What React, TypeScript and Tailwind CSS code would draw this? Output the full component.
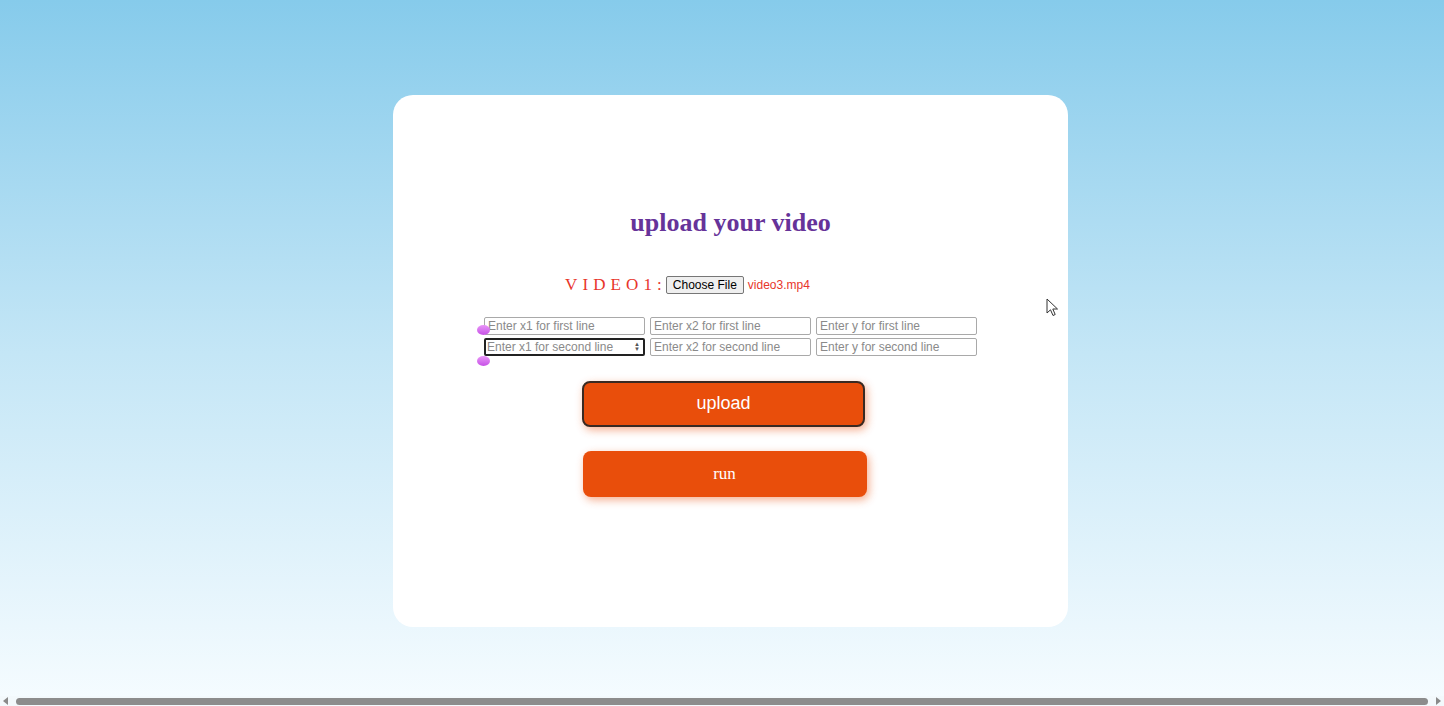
import React from 'react'

const serif = { fontFamily: '"Liberation Serif", "Times New Roman", serif' }

const FIELDS = [
  ['Enter x1 for first line', 'Enter x2 for first line', 'Enter y for first line'],
  ['Enter x1 for second line', 'Enter x2 for second line', 'Enter y for second line'],
]

const Cursor = () => (
  <svg width="14" height="20" viewBox="0 0 14 20" className="absolute left-[1046px] top-[298px]">
    <path d="M1 1 L1 15 L4.5 11.8 L7 17.5 L9.2 16.5 L6.8 11 L11.5 11 Z" fill="#fff" stroke="#333" strokeWidth="1" strokeLinejoin="round" />
  </svg>
)

const App: React.FC = () => {
  return (
    <div
      className="relative w-full h-[706px] overflow-hidden flex flex-col bg-linear-to-b from-[#86cbeb] via-[#c4e6f6] to-[#f6fcff]"
      style={{ fontFamily: '"Liberation Sans", Arial, sans-serif' }}
    >
      <div className="flex-1 flex justify-center pt-[95px] pl-[17px]">
        <div className="w-[675px] h-[532px] bg-white rounded-[20px] flex flex-col items-center pt-[111px]">
          <h1 className="text-[26px] leading-[34px] font-bold text-[#663399]" style={serif}>
            upload your video
          </h1>

          <div className="flex items-center mt-[32px] w-[331px]">
            <span className="text-[17px] text-[#e8352b] tracking-[0.3em] mr-[-1px]" style={serif}>
              VIDEO1:
            </span>
            <div className="flex items-center text-[12px] text-[#e8352b]">
              <button className="h-[18px] px-[6px] text-[12px] text-black bg-[#efefef] border border-[#767676] rounded-[2px] leading-none">
                Choose File
              </button>
              <span className="ml-[4px]">video3.mp4</span>
            </div>
          </div>

          <div className="relative flex flex-col gap-[3px] mt-[19px]">
            {FIELDS.map((row, i) => (
              <div key={i} className="flex gap-[5px]">
                {row.map((p, j) => {
                  const focused = i === 1 && j === 0
                  return (
                    <div
                      key={p}
                      className={
                        focused
                          ? 'w-[161px] h-[18px] border-2 border-[#222] rounded-[2px] flex items-center justify-between pl-[1px] pr-[3px] bg-white'
                          : 'w-[161px] h-[18px] border border-[#a9a9a9] rounded-[2px] flex items-center pl-[3px] bg-white'
                      }
                    >
                      <span className="text-[12px] text-[#8a8a8a] leading-none whitespace-nowrap">{p}</span>
                      {focused && (
                        <span className="flex flex-col text-[6px] leading-[5px] text-[#555]">
                          <span>▲</span>
                          <span>▼</span>
                        </span>
                      )}
                    </div>
                  )
                })}
              </div>
            ))}
            <span className="absolute left-[-7px] top-[8px] w-[13px] h-[10px] rounded-[50%] bg-linear-to-b from-[#e994f7] to-[#c64fe6]" />
            <span className="absolute left-[-7px] top-[39px] w-[13px] h-[10px] rounded-[50%] bg-linear-to-b from-[#e994f7] to-[#c64fe6]" />
          </div>

          <button className="mt-[25px] mr-[14px] w-[283px] h-[46px] rounded-[8px] bg-[#e94e0b] border-2 border-[#3a2a22] text-white text-[18px] shadow-[2px_3px_8px_rgba(233,78,11,0.45)]">
            upload
          </button>
          <button
            className="mt-[24px] mr-[12px] w-[284px] h-[46px] rounded-[8px] bg-[#e94e0b] text-white text-[17px] shadow-[2px_3px_8px_rgba(233,78,11,0.45)]"
            style={serif}
          >
            run
          </button>
        </div>
      </div>

      <div className="h-[10px] flex items-center bg-[#f3f9fc] px-[3px] gap-[5px]">
        <span className="w-0 h-0 border-y-[4px] border-y-transparent border-r-[5px] border-r-[#8a8a8a]" />
        <span className="flex-1 h-[7px] rounded-full bg-[#8c8c8c] mx-[3px]" />
        <span className="w-0 h-0 border-y-[4px] border-y-transparent border-l-[5px] border-l-[#8a8a8a]" />
      </div>

      <Cursor />
    </div>
  )
}

export default App
